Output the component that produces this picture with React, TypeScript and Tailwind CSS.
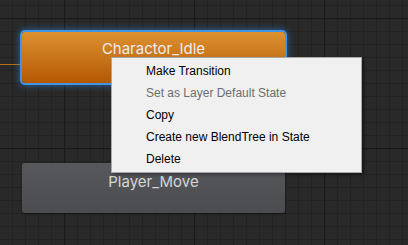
const menuItems = [
  { label: "Make Transition", disabled: false },
  { label: "Set as Layer Default State", disabled: true },
  { label: "Copy", disabled: false },
  { label: "Create new BlendTree in State", disabled: false },
  { label: "Delete", disabled: false },
];

function Grid() {
  return (
    <svg className="absolute inset-0" width="408" height="245">
      <defs>
        <pattern id="minor" x="-1" y="5" width="13" height="13" patternUnits="userSpaceOnUse">
          <path d="M0.5 0V13M0 0.5H13" stroke="#222222" strokeWidth="1" />
        </pattern>
        <pattern id="major" x="-66" y="18" width="130" height="130" patternUnits="userSpaceOnUse">
          <path d="M0.5 0V130M0 0.5H130" stroke="#191919" strokeWidth="1.5" />
        </pattern>
      </defs>
      <rect width="408" height="245" fill="#292929" />
      <rect width="408" height="245" fill="url(#minor)" />
      <rect width="408" height="245" fill="url(#major)" />
      <line x1="0" y1="64.5" x2="22" y2="64.5" stroke="#b07215" strokeWidth="1" />
    </svg>
  );
}

export default function App() {
  return (
    <div className="relative w-[408px] h-[245px] overflow-hidden bg-[#292929] font-['Inter','Noto_Sans',sans-serif]">
      <Grid />

      <div className="absolute left-[22px] top-[32px] w-[263px] h-[51px] rounded-[3px] bg-gradient-to-b from-[#dd912e] to-[#b45800] shadow-[0_0_0_2px_#3f95e8,0_0_6px_3px_rgba(50,140,235,0.5)] flex justify-center pt-[7px]">
        <span className="text-[15px] leading-[20px] text-[#ececec]">Charactor_Idle</span>
      </div>

      <div className="absolute left-[22px] top-[163px] w-[263px] h-[50px] rounded-[3px] bg-gradient-to-b from-[#56585c] to-[#4a4c50] shadow-[0_1px_2px_rgba(0,0,0,0.5)] flex justify-center pt-[9px]">
        <span className="text-[15px] leading-[20px] text-[#d6d6d6]">Player_Move</span>
      </div>

      <div className="absolute left-[111px] top-[57px] w-[251px] h-[116px] bg-[#f0f0f0] border border-[#a9a9a9] shadow-[2px_2px_3px_rgba(0,0,0,0.35)] pt-[2px] font-['Liberation_Sans','Noto_Sans',sans-serif]">
        {menuItems.map((item) => (
          <div
            key={item.label}
            className={`h-[22px] flex items-center pl-[34px] text-[12px] ${item.disabled ? "text-[#6d6d6d]" : "text-[#000000]"}`}
          >
            {item.label}
          </div>
        ))}
      </div>
    </div>
  );
}
